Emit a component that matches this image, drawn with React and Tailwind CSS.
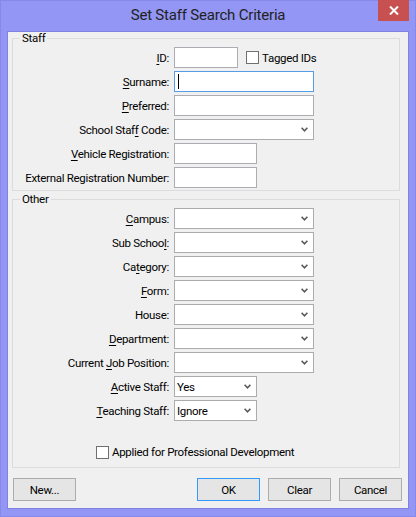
import React from 'react'
import clsx from 'clsx'

// Win8-style "Set Staff Search Criteria" dialog

function Chevron() {
  return (
    <svg width="7" height="5" viewBox="0 0 7 5" className="shrink-0">
      <path d="M0.6 0.8 L3.5 3.8 L6.4 0.8" fill="none" stroke="#5a5a5a" strokeWidth="1.6" />
    </svg>
  )
}

function Acc({ children }) {
  return <span className="underline decoration-1 underline-offset-[2px]">{children}</span>
}

function TextBox({ w, focus }) {
  return (
    <div
      className={clsx(
        'h-[21px] bg-white border flex items-center',
        w,
        focus ? 'border-[#569de5]' : 'border-[#abadb3]'
      )}
    >
      {focus && <span className="ml-[3px] w-px h-[15px] bg-black" />}
    </div>
  )
}

function Combo({ w = 'w-[140px]', value }) {
  return (
    <div className={clsx('h-[21px] bg-white border border-[#acacac] flex items-center justify-between pl-[2px] pr-[5px]', w)}>
      <span>{value}</span>
      <Chevron />
    </div>
  )
}

function Row({ label, children }) {
  return (
    <div className="flex items-center h-[21px]">
      <div className="w-[157px] text-right pr-[1px] whitespace-nowrap">{label}</div>
      <div className="ml-[4px] flex items-center">{children}</div>
    </div>
  )
}

function CheckBox() {
  return <span className="w-[13px] h-[13px] border border-[#707070] bg-white shrink-0" />
}

function Button({ children, primary }) {
  return (
    <button
      className={clsx(
        'w-[63px] h-[23px] border bg-[#e5e5e5] text-black',
        primary ? 'border-[#3399ff]' : 'border-[#acacac]'
      )}
    >
      {children}
    </button>
  )
}

export default function App() {
  return (
    <div className="w-[416px] h-[517px] bg-[#9396f4] border border-[#8689ea] flex flex-col text-[11.5px] tracking-[-0.3px] leading-[16px] text-black font-['Roboto','Noto_Sans',sans-serif]">
      {/* Title bar */}
      <div className="h-[30px] grid grid-cols-[1fr_auto_1fr] shrink-0">
        <div />
        <div className="self-center text-[15px] tracking-[-0.2px] leading-[20px] text-[#222] -mt-[2px]">Set Staff Search Criteria</div>
        <div className="justify-self-end mr-[6px] -mt-px">
          <div className="w-[31px] h-[21px] bg-[#c75050] flex items-center justify-center">
            <svg width="10" height="9" viewBox="0 0 10 9">
              <path d="M1 0.5 L9 8.5 M9 0.5 L1 8.5" stroke="white" strokeWidth="2" />
            </svg>
          </div>
        </div>
      </div>

      {/* Client area */}
      <div className="mx-[6px] mb-[7px] flex-1 bg-[#f0f0f0] border border-[#7f82e4] flex flex-col pl-[4px] pr-[8px]">
        <fieldset className="border border-[#dcdcdc] px-0 pt-[2px] pb-[2px] flex flex-col gap-[3px]">
          <legend className="ml-[7px] px-[2px] leading-[13px]">Staff</legend>
          <Row label={<><Acc>I</Acc>D:</>}>
            <TextBox w="w-[64px]" />
            <span className="ml-[8px] flex items-center gap-[3px]">
              <CheckBox />
              <span>Tagged IDs</span>
            </span>
          </Row>
          <Row label={<><Acc>S</Acc>urname:</>}>
            <TextBox w="w-[140px]" focus />
          </Row>
          <Row label={<><Acc>P</Acc>referred:</>}>
            <TextBox w="w-[140px]" />
          </Row>
          <Row label={<>School Staf<Acc>f</Acc> Code:</>}>
            <Combo />
          </Row>
          <Row label={<><Acc>V</Acc>ehicle Registration:</>}>
            <TextBox w="w-[83px]" />
          </Row>
          <Row label="External Registration Number:">
            <TextBox w="w-[83px]" />
          </Row>
        </fieldset>

        <fieldset className="mt-[2px] border border-[#dcdcdc] px-0 pt-[2px] pb-[7px] flex flex-col gap-[3px]">
          <legend className="ml-[7px] px-[2px] leading-[13px]">Other</legend>
          <Row label={<><Acc>C</Acc>ampus:</>}>
            <Combo />
          </Row>
          <Row label={<>Sub Schoo<Acc>l</Acc>:</>}>
            <Combo />
          </Row>
          <Row label={<>Ca<Acc>t</Acc>egory:</>}>
            <Combo />
          </Row>
          <Row label={<><Acc>F</Acc>orm:</>}>
            <Combo />
          </Row>
          <Row label="House:">
            <Combo />
          </Row>
          <Row label={<><Acc>D</Acc>epartment:</>}>
            <Combo />
          </Row>
          <Row label={<>Current <Acc>J</Acc>ob Position:</>}>
            <Combo />
          </Row>
          <Row label={<><Acc>A</Acc>ctive Staff:</>}>
            <Combo w="w-[83px]" value="Yes" />
          </Row>
          <Row label={<><Acc>T</Acc>eaching Staff:</>}>
            <Combo w="w-[83px]" value="Ignore" />
          </Row>
          <div className="mt-[20px] pl-[83px] flex items-center gap-[3px] h-[16px]">
            <CheckBox />
            <span>Applied for Professional Development</span>
          </div>
        </fieldset>

        <div className="mt-[10px] flex items-center pl-px -mr-[2px]">
          <Button>New...</Button>
          <div className="flex-1" />
          <div className="flex gap-[8px]">
            <Button primary>OK</Button>
            <Button>Clear</Button>
            <Button>Cancel</Button>
          </div>
        </div>
      </div>
    </div>
  )
}
